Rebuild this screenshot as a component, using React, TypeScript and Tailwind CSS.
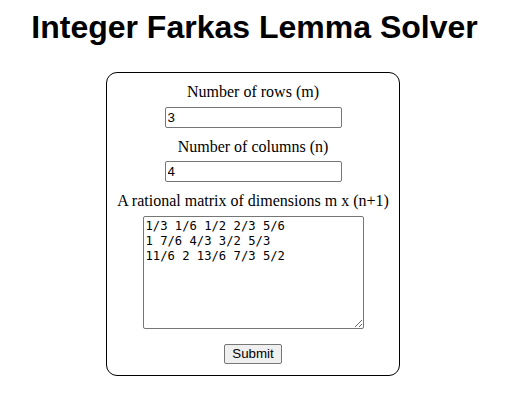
import React, { useState } from 'react';

const App = () => {
  const [rows, setRows] = useState('3');
  const [cols, setCols] = useState('4');
  const [matrix, setMatrix] = useState(
    '1/3 1/6 1/2 2/3 5/6\n1 7/6 4/3 3/2 5/3\n11/6 2 13/6 7/3 5/2'
  );

  const handleSubmit = (e: React.FormEvent<HTMLFormElement>) => {
    e.preventDefault();
  };

  return (
    <div className="min-h-[409px] bg-white text-black">
      <h1 className="mt-[9px] mb-[26px] text-center text-[32px] leading-[37px] font-bold font-['Liberation_Sans',Arial,sans-serif]">
        Integer Farkas Lemma Solver
      </h1>
      <div className="flex justify-center pr-[3px]">
        <form
          onSubmit={handleSubmit}
          className="flex w-[294px] flex-col items-center rounded-[11px] border border-black pt-[10px] pb-[11px] font-['Liberation_Serif','Times_New_Roman',serif] text-[16px]"
        >
          <label htmlFor="rows" className="mb-[6px] h-[18px] leading-[18px]">
            Number of rows (m)
          </label>
          <input
            id="rows"
            type="text"
            value={rows}
            onChange={e => setRows(e.target.value)}
            className="h-[21px] w-[177px] rounded-[2px] border border-[#767676] px-[2px] py-[1px] font-['Liberation_Sans',Arial,sans-serif] text-[13.33px] outline-none"
          />
          <label htmlFor="cols" className="mt-[10px] mb-[5px] h-[18px] leading-[18px]">
            Number of columns (n)
          </label>
          <input
            id="cols"
            type="text"
            value={cols}
            onChange={e => setCols(e.target.value)}
            className="h-[21px] w-[177px] rounded-[2px] border border-[#767676] px-[2px] py-[1px] font-['Liberation_Sans',Arial,sans-serif] text-[13.33px] outline-none"
          />
          <label htmlFor="matrix" className="mt-[10px] mb-[6px] h-[18px] leading-[18px]">
            A rational matrix of dimensions m x (n+1)
          </label>
          <textarea
            id="matrix"
            value={matrix}
            onChange={e => setMatrix(e.target.value)}
            className="h-[113px] w-[221px] rounded-[2px] border border-[#767676] px-[2px] py-[2px] font-['DejaVu_Sans_Mono',monospace] text-[12.2px] leading-[15px] outline-none"
          />
          <button
            type="submit"
            className="mt-[15px] h-[20px] rounded-[2px] border border-[#767676] bg-[#efefef] px-[7px] font-['Liberation_Sans',Arial,sans-serif] text-[13.33px] leading-[16px] text-black"
          >
            Submit
          </button>
        </form>
      </div>
    </div>
  );
};

export default App;
